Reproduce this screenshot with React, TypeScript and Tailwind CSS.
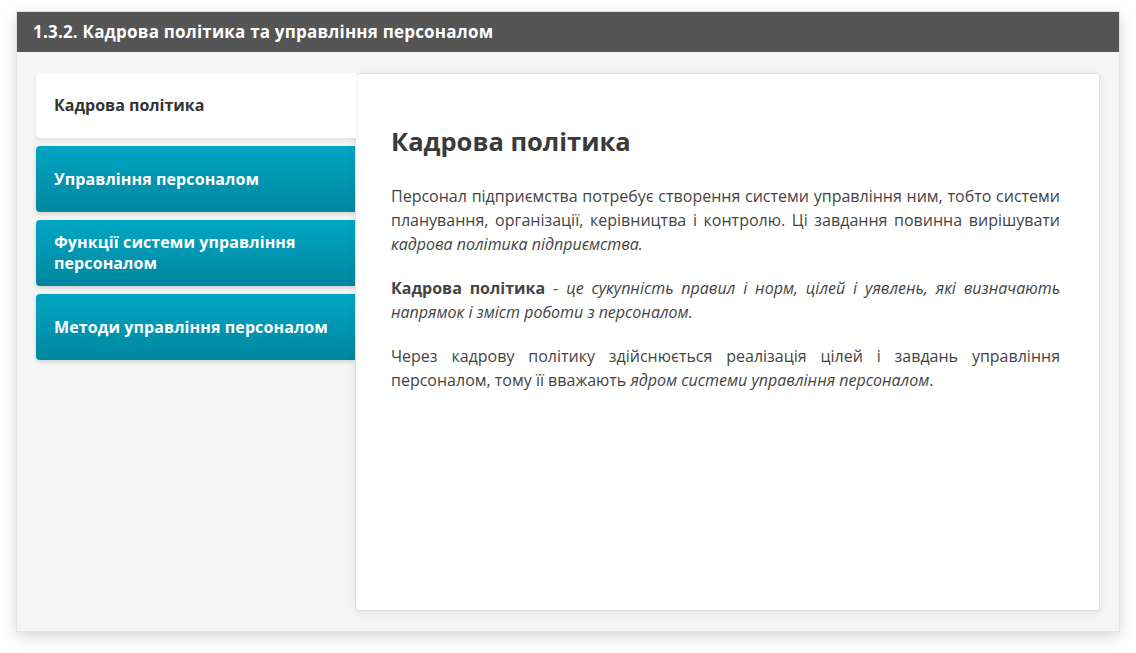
import { useState } from "react";

const tabs = [
  "Кадрова політика",
  "Управління персоналом",
  "Функції системи управління персоналом",
  "Методи управління персоналом",
];

export default function App() {
  const [active, setActive] = useState(0);

  return (
    <div
      className="w-[1136px] h-[653px] bg-white pt-[11px] pl-[16px]"
      style={{ fontFamily: '"Open Sans", "Noto Sans", sans-serif' }}
    >
      <div className="w-[1104px] h-[621px] flex flex-col bg-[#f5f5f5] border border-[#e2e2e2] shadow-[0_5px_14px_rgba(0,0,0,0.16)]">
        <div className="h-[40px] shrink-0 bg-[#555555] flex items-center pl-[16px] text-white font-bold text-[17px] tracking-[0.2px]">
          1.3.2. Кадрова політика та управління персоналом
        </div>

        <div className="flex-1 flex pt-[21px] pl-[19px] pr-[19px] pb-[20px]">
          <div className="w-[319px] shrink-0 flex flex-col gap-[8px]">
            {tabs.map((t, i) =>
              i === active ? (
                <button
                  key={t}
                  onClick={() => setActive(i)}
                  className="h-[65px] text-left pl-[18px] pr-3 bg-white rounded-l-[4px] text-[#333] font-bold text-[16px] leading-[21px] shadow-[0_3px_5px_rgba(0,0,0,0.08)] relative z-10 -mr-[1px]"
                >
                  {t}
                </button>
              ) : (
                <button
                  key={t}
                  onClick={() => setActive(i)}
                  className="h-[66px] text-left pl-[18px] pr-3 bg-gradient-to-b from-[#00a6c4] to-[#00879f] rounded-l-[4px] text-white font-bold text-[16px] leading-[21px] tracking-[0.1px] shadow-[0_2px_4px_rgba(0,0,0,0.15)]"
                >
                  {t}
                </button>
              )
            )}
          </div>

          <div className="flex-1 bg-white border border-[#e0e0e0] rounded-[4px] shadow-[0_2px_8px_rgba(0,0,0,0.08)] pl-[35px] pr-[39px] pt-[49px] text-[#444] text-[16px] leading-[24px]">
            <h2 className="text-[25.5px] leading-[36px] font-bold text-[#3a3a3a] mb-[25px]">Кадрова політика</h2>
            <p className="text-justify mb-[20px]">
              Персонал підприємства потребує створення системи управління ним, тобто системи планування, організації,
              керівництва і контролю. Ці завдання повинна вирішувати <i>кадрова політика підприємства.</i>
            </p>
            <p className="text-justify mb-[20px]">
              <b>Кадрова політика</b> - <i>це сукупність правил і норм, цілей і уявлень, які визначають напрямок і зміст роботи з персоналом.</i>
            </p>
            <p className="text-justify">
              Через кадрову політику здійснюється реалізація цілей і завдань управління персоналом, тому її вважають{" "}
              <i>ядром системи управління персоналом</i>.
            </p>
          </div>
        </div>
      </div>
    </div>
  );
}
